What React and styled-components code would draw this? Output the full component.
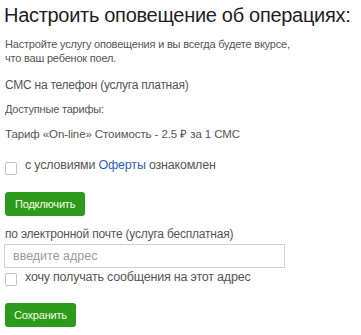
import styled, { createGlobalStyle } from 'styled-components';

const GlobalStyle = createGlobalStyle`
body {
  margin: 0;
  background: #fff;
  font-family: "Liberation Sans", Arial, sans-serif;
}
`;

export default function App () {
    return (
        <>
            <GlobalStyle />
            <Page>
                <Title>Настроить оповещение об операциях:</Title>
                <Description>
                    Настройте услугу оповещения и вы всегда будете вкурсе,<br />
                    что ваш ребенок поел.
                </Description>
                <Label $size={12} $top={13} $track={-0.25}>СМС на телефон (услуга платная)</Label>
                <Label $size={11} $top={10} $track={-0.2}>Доступные тарифы:</Label>
                <Label $size={11.5} $top={11} $track={-0.1}>Тариф «On-line» Стоимость - 2.5 ₽ за 1 СМС</Label>
                <CheckRow $top={17}>
                    <Box type="checkbox" $offset={4} />
                    <span>с условиями <Link href="#">Оферты</Link> ознакомлен</span>
                </CheckRow>
                <GreenButton $top={17} $pad={10}>Подключить</GreenButton>
                <Label $size={12} $top={11} $track={-0.2}>по электронной почте (услуга бесплатная)</Label>
                <EmailInput placeholder="введите адрес" />
                <CheckRow $top={2}>
                    <Box type="checkbox" $offset={3} />
                    <span>хочу получать сообщения на этот адрес</span>
                </CheckRow>
                <GreenButton $top={17} $pad={9}>Сохранить</GreenButton>
            </Page>
        </>
    )
}

const Page = styled.div`
display: flex;
flex-direction: column;
align-items: flex-start;
padding: 3px 0 8px 5px;
`

const Title = styled.h1`
margin: 0 0 0 -1px;
font-size: 20px;
line-height: 24px;
font-weight: 400;
letter-spacing: -0.3px;
color: #1e1e1e;
white-space: nowrap;
`

const Description = styled.p`
margin: 10px 0 0 0;
font-size: 11px;
line-height: 14px;
letter-spacing: -0.2px;
color: #555;
`

const Label = styled.div`
margin-top: ${(p) => p.$top}px;
font-size: ${(p) => p.$size}px;
line-height: 14px;
letter-spacing: ${(p) => p.$track}px;
color: #555;
white-space: nowrap;
`

const CheckRow = styled.label`
display: flex;
align-items: flex-start;
gap: 8px;
margin-top: ${(p) => p.$top}px;
font-size: 12.5px;
line-height: 14px;
letter-spacing: -0.2px;
color: #555;
white-space: nowrap;
`

const Box = styled.input`
appearance: none;
margin: ${(p) => p.$offset}px 0 0 0;
width: 12px;
height: 13px;
border: 1px solid #c4c4c4;
border-radius: 2px;
background: #fff;
flex-shrink: 0;
`

const Link = styled.a`
color: #2f5fbf;
text-decoration: none;
`

const GreenButton = styled.button`
margin-top: ${(p) => p.$top}px;
height: 24px;
padding: 0 ${(p) => p.$pad}px;
border: none;
border-radius: 3px;
background: #2c9b1c;
color: #fbfbe2;
font-family: "Liberation Sans", Arial, sans-serif;
font-size: 11px;
letter-spacing: -0.2px;
`

const EmailInput = styled.input`
box-sizing: border-box;
margin: 3px 0 0 -1px;
width: 281px;
height: 24px;
padding: 0 8px;
border: 1px solid #d2d2d2;
border-radius: 0;
font-family: "Liberation Sans", Arial, sans-serif;
font-size: 12.5px;
color: #555;
outline: none;

&::placeholder {
  color: #9a9a9a;
}
`
